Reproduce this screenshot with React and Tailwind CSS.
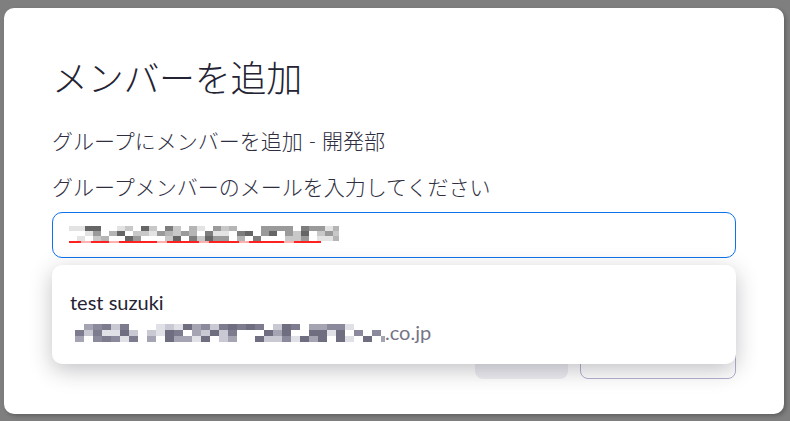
import React from 'react';

const font = { fontFamily: 'Lato, "Noto Sans CJK JP", sans-serif' };

// redacted text drawn as a pixel mosaic
function Mosaic({ width, height, cell = 6, rows = 3, seed = 1, tones, underline }) {
  let s = seed;
  const rand = () => {
    s = (s * 9301 + 49297) % 233280;
    return s / 233280;
  };
  const cols = Math.ceil(width / cell);
  const rh = (underline ? height - 3 : height) / rows;
  const rects = [];
  for (let c = 0; c < cols; c++) {
    for (let r = 0; r < rows; r++) {
      const v = rand();
      if (v < 0.3) continue;
      const tone = tones[Math.floor(rand() * tones.length)];
      rects.push(<rect key={c + '-' + r} x={c * cell} y={r * rh} width={cell} height={rh} fill={tone} />);
    }
  }
  return (
    <svg width={width} height={height} className="block">
      {rects}
      {underline && (
        <>
          <rect x="0" y={height - 3} width={underline} height="2" fill="#ff2020" />
          {[12, 40, 88, 130, 170, 215].map((x) => (
            <rect key={x} x={x} y={height - 3} width="10" height="2" fill="#ffb0b0" />
          ))}
        </>
      )}
    </svg>
  );
}

export default function App() {
  return (
    <div className="w-[790px] h-[421px] bg-[#7f7f7f] pt-[8px] pl-[4px] pr-[6px] pb-[7px]" style={font}>
      <div className="relative h-[406px] bg-white rounded-[10px] px-12 pt-[46px] shadow-[2px_2px_4px_rgba(0,0,0,0.25)]">
        <h1 className="text-[36px] leading-[48px] font-light text-[#232333] tracking-[-0.3px]">メンバーを追加</h1>
        <p className="mt-[25px] text-[21px] leading-[28px] font-light text-[#2e2e40]">グループにメンバーを追加 - 開発部</p>
        <p className="mt-[18px] text-[21px] leading-[28px] font-light text-[#2e2e40]">グループメンバーのメールを入力してください</p>
        <div className="mt-[11px] h-[46px] rounded-[10px] border border-[#0e72ed] flex items-center pl-[16px]">
          <Mosaic width={270} height={18} cell={8} rows={3} seed={7} underline={252} tones={['#9a9a9a', '#666666', '#c8c8c8', '#e3e3e3', '#7d7d7d', '#b5b5b5']} />
        </div>
        <div className="mt-[81px] flex justify-end gap-[12px]">
          <div className="w-[93px] h-[40px] rounded-[8px] bg-[#ededf2]" />
          <div className="w-[156px] h-[40px] rounded-[8px] border border-[#b4b0d0] bg-white" />
        </div>

        <div className="absolute left-12 top-[257px] w-[684px] h-[99px] bg-white rounded-[10px] shadow-[0_6px_22px_rgba(35,35,51,0.28)] px-[18px] pt-[24px]">
          <div className="text-[20px] leading-[26px] text-[#232333]">test suzuki</div>
          <div className="mt-[4px] flex items-end">
            <div className="pb-[3px] pl-[5px]">
              <Mosaic width={310} height={18} cell={9} rows={3} seed={23} tones={['#8a8a9c', '#6e6e80', '#c9c9d3', '#a4a4b3', '#e0e0e7', '#7c7c8e']} />
            </div>
            <span className="text-[20px] leading-[26px] text-[#747487]">.co.jp</span>
          </div>
        </div>
      </div>
    </div>
  );
}
